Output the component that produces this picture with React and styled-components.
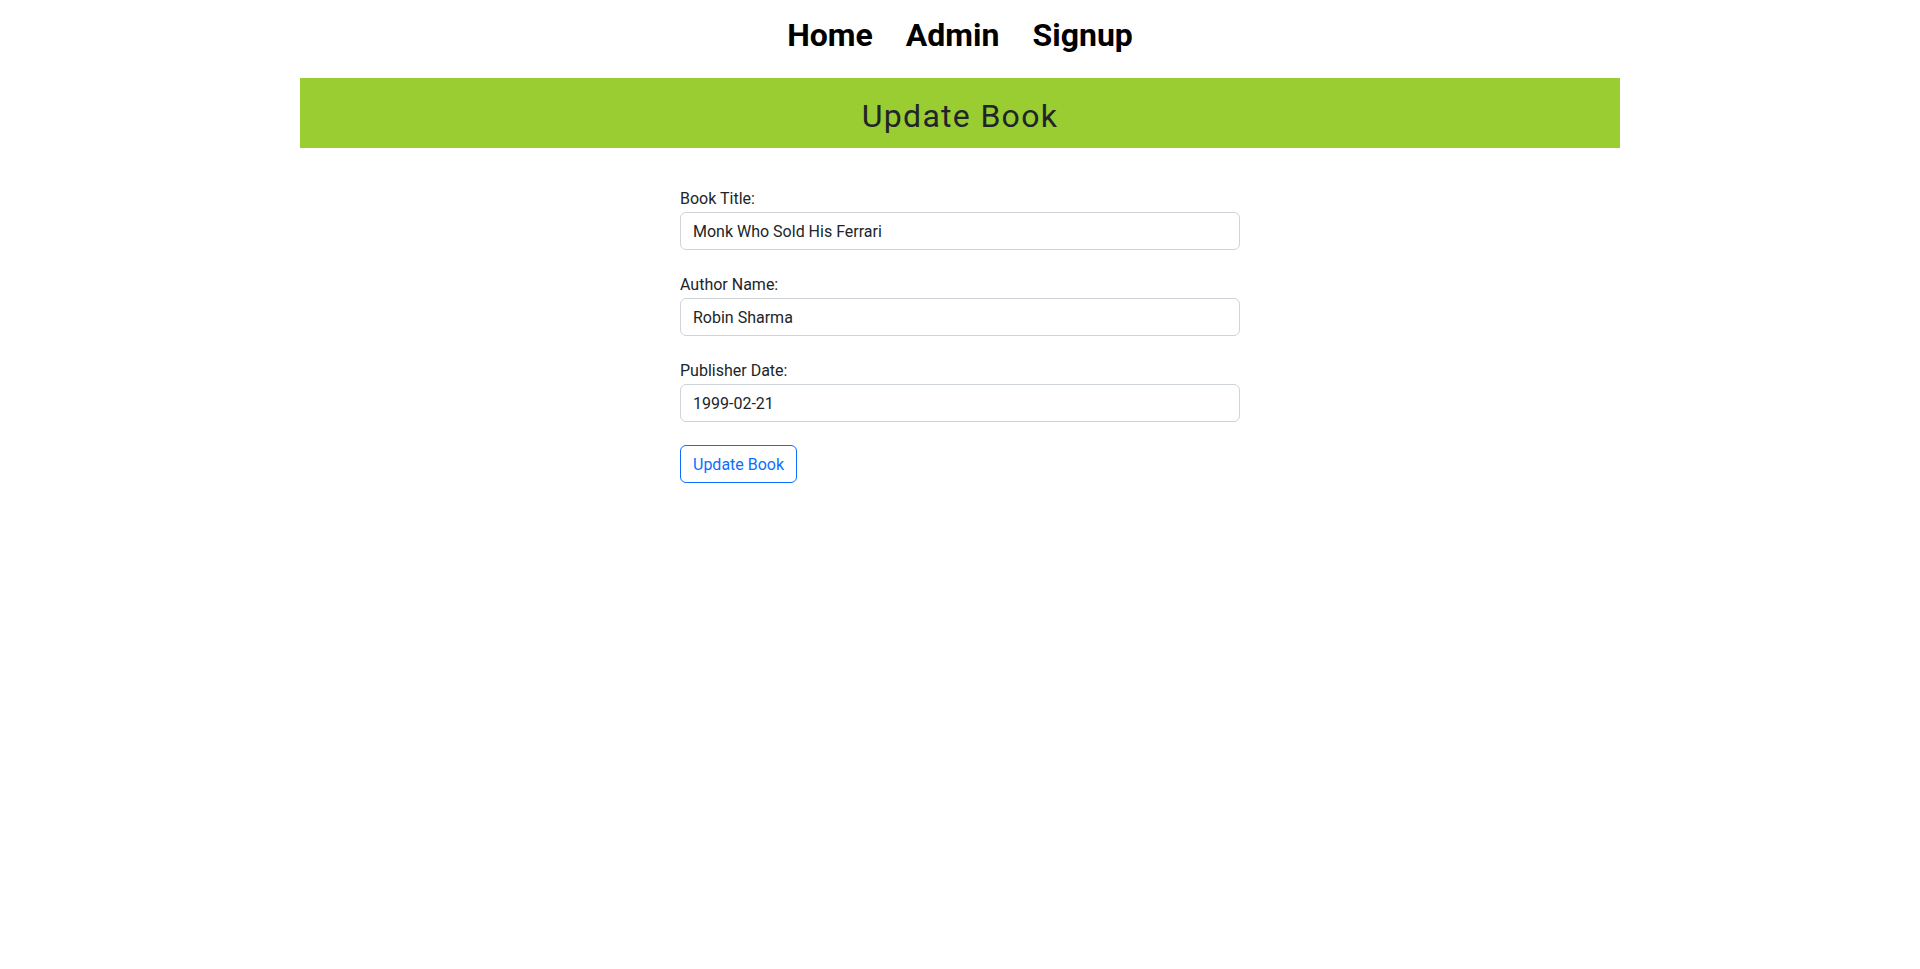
import React, { useState } from "react";
import styled, { createGlobalStyle } from "styled-components";

const GlobalStyle = createGlobalStyle`
  * { box-sizing: border-box; }
  body {
    margin: 0;
    background: #fff;
    color: #212529;
    font-family: Roboto, "Open Sans", sans-serif;
    font-size: 16px;
    line-height: 1.5;
  }
`;

const NavBar = styled.nav`
  height: 78px;
  display: flex;
  justify-content: center;
  align-items: center;
  gap: 33px;
  padding-bottom: 8px;
`;

const NavLink = styled.a`
  font-size: 32px;
  font-weight: 700;
  color: #000;
  text-decoration: none;
  cursor: pointer;
`;

const Container = styled.div`
  width: 1320px;
  margin: 0 auto;
`;

const TitleBar = styled.div`
  height: 70px;
  background: #9acd32;
  display: flex;
  align-items: center;
  justify-content: center;
  padding-top: 6px;
`;

const Title = styled.h2`
  margin: 0;
  font-size: 32px;
  font-weight: 400;
  letter-spacing: 1.3px;
  color: #212529;
`;

const Form = styled.form`
  width: 560px;
  margin: 38px auto 0;
`;

const Field = styled.div`
  margin-bottom: ${({ last }) => (last ? "23px" : "22px")};
`;

const Label = styled.label`
  display: block;
  margin-bottom: 2px;
  padding-top: 1px;
  line-height: 23px;
  font-size: 16px;
  color: #212529;
`;

const Input = styled.input`
  display: block;
  width: 100%;
  height: 38px;
  padding: 6px 12px;
  font-family: inherit;
  font-size: 16px;
  color: #212529;
  border: 1px solid #ced4da;
  border-radius: 6px;
  outline: none;
`;

const SubmitButton = styled.button`
  height: 38px;
  padding: 6px 12px;
  font-family: inherit;
  font-size: 16px;
  color: #0d6efd;
  background: #fff;
  border: 1px solid #0d6efd;
  border-radius: 6px;
  cursor: pointer;
`;

export default function App() {
  const [book, setBook] = useState({
    title: "Monk Who Sold His Ferrari",
    author: "Robin Sharma",
    date: "1999-02-21",
  });

  const update = (key) => (e) => setBook({ ...book, [key]: e.target.value });

  return (
    <>
      <GlobalStyle />
      <NavBar>
        <NavLink href="#home">Home</NavLink>
        <NavLink href="#admin">Admin</NavLink>
        <NavLink href="#signup">Signup</NavLink>
      </NavBar>
      <Container>
        <TitleBar>
          <Title>Update Book</Title>
        </TitleBar>
        <Form onSubmit={(e) => e.preventDefault()}>
          <Field>
            <Label>Book Title:</Label>
            <Input value={book.title} onChange={update("title")} />
          </Field>
          <Field>
            <Label>Author Name:</Label>
            <Input value={book.author} onChange={update("author")} />
          </Field>
          <Field last>
            <Label>Publisher Date:</Label>
            <Input value={book.date} onChange={update("date")} />
          </Field>
          <SubmitButton type="submit">Update Book</SubmitButton>
        </Form>
      </Container>
    </>
  );
}
